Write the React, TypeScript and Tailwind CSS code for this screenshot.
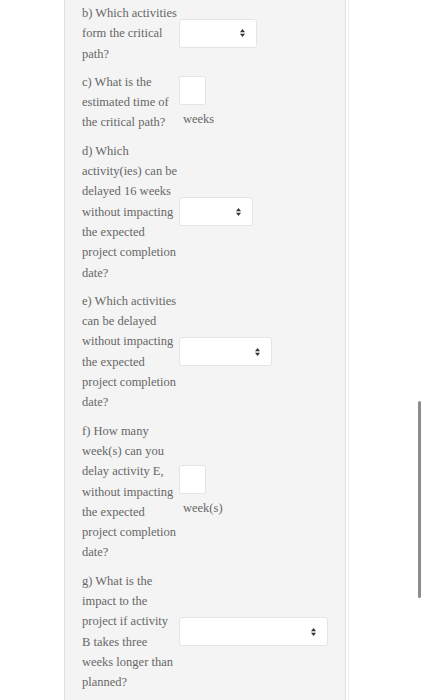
import React from "react";

type Question = {
  id: string;
  lines: string[];
  kind: "select" | "number";
  width?: number;
  unit?: string;
};

const questions: Question[] = [
  { id: "b", lines: ["b) Which activities", "form the critical", "path?"], kind: "select", width: 78 },
  {
    id: "c",
    lines: ["c) What is the", "estimated time of", "the critical path?"],
    kind: "number",
    unit: "weeks",
  },
  {
    id: "d",
    lines: [
      "d) Which",
      "activity(ies) can be",
      "delayed 16 weeks",
      "without impacting",
      "the expected",
      "project completion",
      "date?",
    ],
    kind: "select",
    width: 74,
  },
  {
    id: "e",
    lines: [
      "e) Which activities",
      "can be delayed",
      "without impacting",
      "the expected",
      "project completion",
      "date?",
    ],
    kind: "select",
    width: 93,
  },
  {
    id: "f",
    lines: [
      "f) How many",
      "week(s) can you",
      "delay activity E,",
      "without impacting",
      "the expected",
      "project completion",
      "date?",
    ],
    kind: "number",
    unit: "week(s)",
  },
  {
    id: "g",
    lines: [
      "g) What is the",
      "impact to the",
      "project if activity",
      "B takes three",
      "weeks longer than",
      "planned?",
    ],
    kind: "select",
    width: 149,
  },
];

function UpDown() {
  return (
    <svg width="5" height="8" viewBox="0 0 5 8" className="shrink-0">
      <path d="M2.5 0 L5 3.2 L0 3.2 Z" fill="#333" />
      <path d="M2.5 8 L5 4.8 L0 4.8 Z" fill="#333" />
    </svg>
  );
}

function SelectBox({ width }: { width: number }) {
  return (
    <div
      className="h-[29px] bg-white border border-[#e4e4e4] rounded-[3px] flex items-center justify-end pr-[11px]"
      style={{ width }}
    >
      <UpDown />
    </div>
  );
}

function NumberBox({ unit }: { unit: string }) {
  return (
    <div className="flex flex-col items-start">
      <div className="w-[27px] h-[29px] bg-white border border-[#e4e4e4] rounded-[2px]" />
      <span className="mt-[4px] ml-[4px]">{unit}</span>
    </div>
  );
}

export default function App() {
  return (
    <div
      className="relative w-[425px] h-[700px] overflow-hidden bg-white flex text-[12.5px] leading-[20.3px] text-[#676767]"
      style={{ fontFamily: '"Liberation Serif", "Times New Roman", serif' }}
    >
      <div className="w-[64px] shrink-0" />
      <div className="w-[282px] shrink-0 h-full bg-[#f4f4f4] border-l border-r border-[#e0e0e0] pl-[17px]">
        <div className="-mt-[1px] flex flex-col">
          {questions.map((q) => (
            <div key={q.id} className="flex items-center py-[4px]">
              <div className="w-[97px] shrink-0 whitespace-nowrap">
                {q.lines.map((l, i) => (
                  <div key={i}>{l}</div>
                ))}
              </div>
              {q.kind === "select" ? (
                <SelectBox width={q.width ?? 80} />
              ) : (
                <NumberBox unit={q.unit ?? ""} />
              )}
            </div>
          ))}
        </div>
      </div>
      <div className="w-[2px] shrink-0" />
      <div className="w-[1px] shrink-0 h-full bg-[#ececec]" />
      <div className="flex-1" />
      <div className="absolute left-[418px] top-[401px] w-[3px] h-[197px] rounded-full bg-[#8c8c8c]" />
    </div>
  );
}
